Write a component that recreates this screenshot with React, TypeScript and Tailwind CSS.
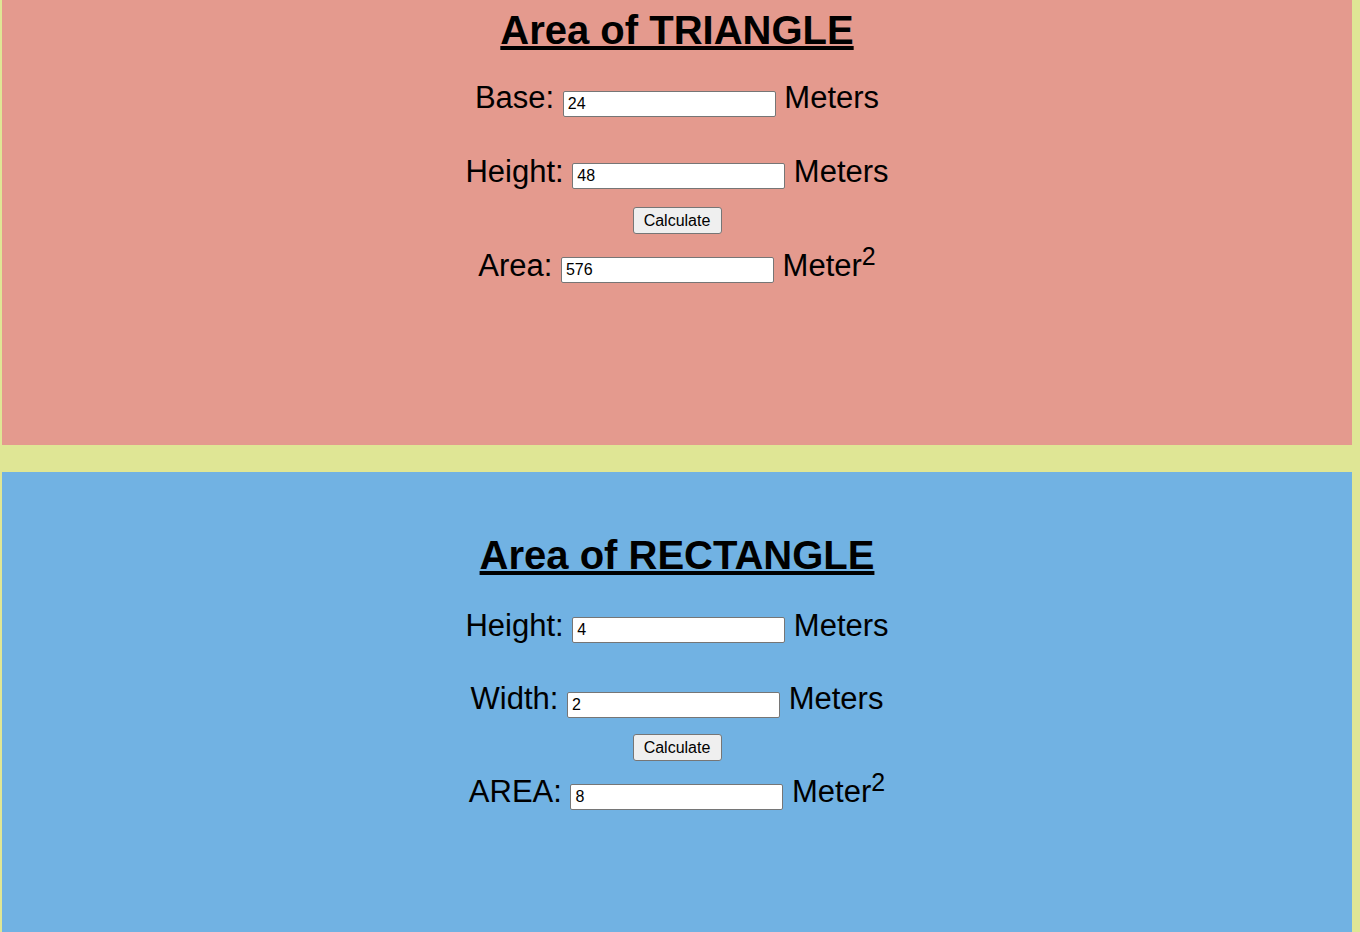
import React from "react";

function Row({
  label,
  value,
  unit,
  mt,
  inputMt,
  sup,
}: {
  label: string;
  value: string;
  unit: string;
  mt: string;
  inputMt: string;
  sup?: boolean;
}) {
  return (
    <div className={`flex items-start justify-center gap-[8.6px] ${mt}`}>
      <span className="text-[31px] leading-[36px] whitespace-nowrap">{label}</span>
      <input
        readOnly
        value={value}
        className={`w-[213px] h-[26px] border border-[#767676] rounded-[2px] bg-white px-[4px] text-[16px] text-black outline-none ${inputMt}`}
      />
      <span className="text-[31px] leading-[36px] whitespace-nowrap">
        {unit}
        {sup && <span className="relative top-[-11px] text-[25px] leading-none">2</span>}
      </span>
    </div>
  );
}

function CalcButton({ mt }: { mt: string }) {
  return (
    <div className={`flex justify-center ${mt}`}>
      <button className="w-[89px] h-[27px] border border-[#767676] rounded-[3px] bg-[#efefef] text-[16px] text-black leading-none">
        Calculate
      </button>
    </div>
  );
}

export default function App() {
  return (
    <div className="min-h-screen bg-[#dfe695] font-['Liberation_Sans',Arial,sans-serif] text-black overflow-hidden h-[932px]">
      <section className="ml-[2px] mr-[8px] h-[445px] bg-[#e49a8e] pt-[7px]">
        <h1 className="text-center text-[40px] leading-[46px] font-bold underline">Area of TRIANGLE</h1>
        <Row label="Base:" value="24" unit="Meters" mt="mt-[27px]" inputMt="mt-[11px]" />
        <Row label="Height:" value="48" unit="Meters" mt="mt-[37px]" inputMt="mt-[9px]" />
        <CalcButton mt="mt-[17px]" />
        <Row label="Area:" value="576" unit="Meter" sup mt="mt-[14px]" inputMt="mt-[9px]" />
      </section>
      <section className="ml-[2px] mr-[8px] mt-[27px] h-[500px] bg-[#71b2e3] pt-[60px]">
        <h1 className="text-center text-[40px] leading-[46px] font-bold underline">Area of RECTANGLE</h1>
        <Row label="Height:" value="4" unit="Meters" mt="mt-[30px]" inputMt="mt-[9px]" />
        <Row label="Width:" value="2" unit="Meters" mt="mt-[37px]" inputMt="mt-[11px]" />
        <CalcButton mt="mt-[16px]" />
        <Row label="AREA:" value="8" unit="Meter" sup mt="mt-[13px]" inputMt="mt-[10px]" />
      </section>
    </div>
  );
}
